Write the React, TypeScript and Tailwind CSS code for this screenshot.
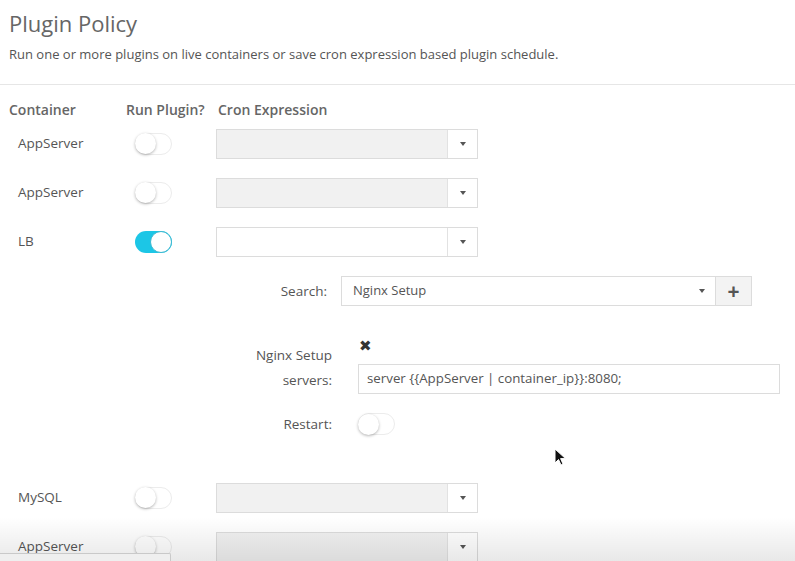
import React from 'react'

const rows = [
  { name: 'AppServer', on: false },
  { name: 'AppServer', on: false },
  { name: 'LB', on: true },
]

function Toggle({ on }: { on: boolean }) {
  return on ? (
    <div className="w-[37px] h-[22px] rounded-full bg-[#1cc6e6] flex items-center justify-end">
      <div className="w-[22px] h-[22px] rounded-full bg-white border border-[#3bb8d0]" />
    </div>
  ) : (
    <div className="w-[37px] h-[22px] rounded-full bg-white border border-[#ececec] flex items-center">
      <div className="w-[21px] h-[21px] -ml-px rounded-full bg-white shadow-[0_1px_3px_rgba(0,0,0,0.3)]" />
    </div>
  )
}

function Caret() {
  return <div className="w-0 h-0 border-x-[3.5px] border-x-transparent border-t-[4px] border-t-[#555]" />
}

function CronSelect({ disabled }: { disabled: boolean }) {
  return (
    <div className={`w-[262px] h-[30px] flex border border-[#dcdcdc] ${disabled ? 'bg-[#f1f1f1]' : 'bg-white'}`}>
      <div className="flex-1" />
      <div className="w-[30px] border-l border-[#e2e2e2] bg-white flex items-center justify-center">
        <Caret />
      </div>
    </div>
  )
}

function Row({ name, on }: { name: string; on: boolean }) {
  return (
    <div className="h-[49px] flex items-center">
      <div className="w-[135px] pl-[18px] text-[13.5px] text-[#555]">{name}</div>
      <div className="w-[81px]"><Toggle on={on} /></div>
      <CronSelect disabled={!on} />
    </div>
  )
}

export default function App() {
  return (
    <div className="relative w-[795px] h-[561px] overflow-hidden bg-white text-[#555]" style={{ fontFamily: '"Open Sans", "DejaVu Sans", sans-serif' }}>
      {/* header */}
      <div className="px-[9px] pt-[8px] h-[85px] border-b border-[#e6e6e6]">
        <h1 className="text-[22px] leading-[30px] text-[#666]">Plugin Policy</h1>
        <p className="mt-[8px] text-[13px] leading-[17px] text-[#555]">
          Run one or more plugins on live containers or save cron expression based plugin schedule.
        </p>
      </div>

      {/* column headers */}
      <div className="flex items-center h-[20px] mt-[14px] text-[14px] font-semibold text-[#666]">
        <div className="w-[126px] pl-[9px]">Container</div>
        <div className="w-[92px]">Run Plugin?</div>
        <div>Cron Expression</div>
      </div>

      <div>
        {rows.map((r, i) => <Row key={i} {...r} />)}
      </div>

      {/* plugin config */}
      <div className="flex items-center h-[30px] mt-[10px] text-[13.5px]">
        <div className="w-[327px] text-right text-[#555]">Search:</div>
        <div className="ml-[14px] w-[375px] h-[30px] border border-[#dcdcdc] bg-white flex items-center pl-[11px] pr-[10px]">
          <span className="flex-1 text-[13px] text-[#555]">Nginx Setup</span>
          <Caret />
        </div>
        <div className="w-[36px] h-[30px] border border-l-0 border-[#dcdcdc] bg-[#f3f3f3] flex items-center justify-center text-[21px] font-bold text-[#555] leading-none">
          +
        </div>
      </div>

      <div className="flex mt-[34px]">
        <div className="w-[332px] text-right text-[13.5px] leading-[25px] text-[#555] pt-[3px]">
          <div>Nginx Setup</div>
          <div>servers:</div>
        </div>
        <div className="ml-[26px]">
          <div className="h-[24px] pl-[1px] text-[15px] font-bold text-[#333] leading-[10px]">✖</div>
          <div className="w-[422px] h-[30px] border border-[#dcdcdc] bg-white flex items-center px-[8px] text-[13.3px] text-[#555]">
            {'server {{AppServer | container_ip}}:8080;'}
          </div>
        </div>
      </div>

      <div className="flex items-center h-[30px] mt-[15px] text-[13.5px]">
        <div className="w-[332px] text-right text-[#555]">Restart:</div>
        <div className="ml-[26px]"><Toggle on={false} /></div>
      </div>

      <div className="mt-[34px]">
        <Row name="MySQL" on={false} />
        <Row name="AppServer" on={false} />
      </div>

      {/* bottom fade */}
      <div className="absolute left-0 right-0 bottom-0 h-[44px] pointer-events-none bg-gradient-to-b from-transparent to-black/[0.09]" />
      <div className="absolute left-0 bottom-0 w-[171px] h-[8px] bg-[#efefef] border-t border-r border-[#c9c9c9] rounded-tr-[2px]" />

      {/* cursor */}
      <svg className="absolute left-[554px] top-[448px]" width="13" height="19" viewBox="0 0 13 19">
        <path d="M1 1 L1 15 L4.5 11.5 L7 17 L9 16 L6.6 10.6 L11.5 10.6 Z" fill="#111" stroke="#fff" strokeWidth="1" />
      </svg>
    </div>
  )
}
